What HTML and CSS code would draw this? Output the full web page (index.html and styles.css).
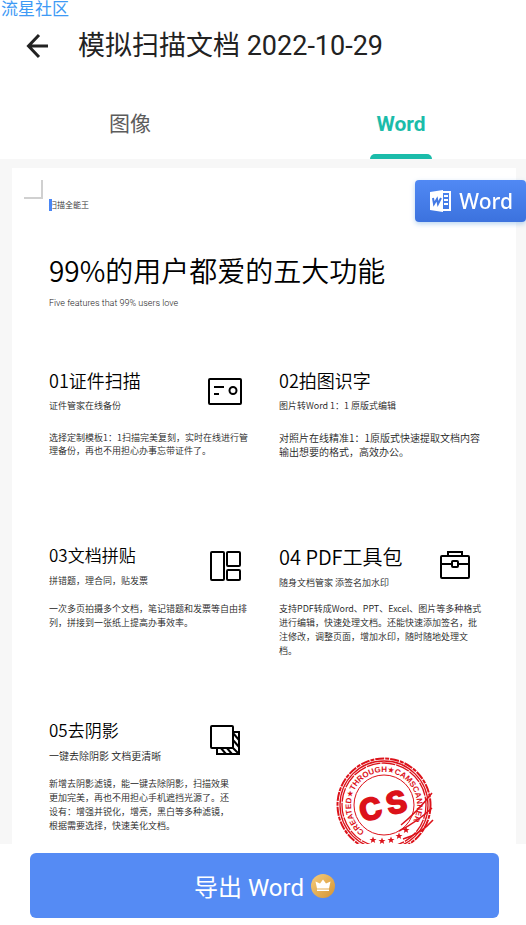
FILE: index.html
```
<!DOCTYPE html>
<html lang="zh-CN">
<head>
    <meta charset="UTF-8">
    <meta name="viewport" content="width=device-width, initial-scale=1.0">
    <title>模拟扫描文档 2022-10-29</title>
    <link rel="stylesheet" href="styles.css">
</head>
<body>
    <span class="watermark">流星社区</span>

    <header class="topbar">
        <button type="button" class="back" aria-label="返回">
            <svg width="24" height="26" viewBox="0 0 24 26" fill="none" stroke="#222" stroke-width="3">
                <path d="M22 13H3M13 2L2.500 13L13 24"/>
            </svg>
        </button>
        <h1>模拟扫描文档 2022-10-29</h1>
    </header>

    <nav class="tabs">
        <button type="button" class="tab">图像</button>
        <button type="button" class="tab active">Word</button>
    </nav>

    <div class="viewer">
        <main class="preview">
            <article class="page">
                <div class="corner"></div>
                <p class="brand">扫描全能王</p>
                <h2>99%的用户都爱的五大功能</h2>
                <p class="subtitle">Five features that 99% users love</p>

                <div class="features">
                    <section class="feature first">
                        <div class="head">
                            <div>
                                <h3>01证件扫描</h3>
                                <p class="sub">证件管家在线备份</p>
                            </div>
                            <svg class="icon" width="34" height="34" viewBox="0 0 34 34" fill="none" stroke="#000" stroke-width="2">
                                <rect x="1" y="4" width="32" height="25" rx="1"/>
                                <path d="M6 12H16M6 19H11"/>
                                <circle cx="25" cy="15.500" r="3.500"/>
                            </svg>
                        </div>
                        <p class="desc">选择定制模板1：1扫描完美复刻，实时在线进行管<br>理备份，再也不用担心办事忘带证件了。</p>
                    </section>

                    <section class="feature first medium">
                        <div class="head">
                            <div>
                                <h3>02拍图识字</h3>
                                <p class="sub">图片转Word 1：1 原版式编辑</p>
                            </div>
                        </div>
                        <p class="desc">对照片在线精准1：1原版式快速提取文档内容<br>输出想要的格式，高效办公。</p>
                    </section>

                    <section class="feature">
                        <div class="head">
                            <div>
                                <h3>03文档拼贴</h3>
                                <p class="sub">拼错题，理合同，贴发票</p>
                            </div>
                            <svg class="icon" width="32" height="32" viewBox="0 0 32 32" fill="none" stroke="#000" stroke-width="2">
                                <rect x="1" y="2" width="13" height="28" rx="1"/>
                                <rect x="17" y="2" width="13" height="14" rx="1"/>
                                <rect x="17" y="20" width="13" height="10" rx="1"/>
                            </svg>
                        </div>
                        <p class="desc">一次多页拍摄多个文档，笔记错题和发票等自由排<br>列，拼接到一张纸上提高办事效率。</p>
                    </section>

                    <section class="feature large">
                        <div class="head">
                            <div>
                                <h3>04 PDF工具包</h3>
                                <p class="sub">随身文档管家 添签名加水印</p>
                            </div>
                            <svg class="icon" width="32" height="32" viewBox="0 0 32 32" fill="none" stroke="#000" stroke-width="2">
                                <rect x="1" y="6" width="28" height="22" rx="1"/>
                                <path d="M8 6V2H22V6M1 14H12M18 14H29"/>
                                <rect x="12" y="11" width="6" height="6" rx="1"/>
                            </svg>
                        </div>
                        <p class="desc">支持PDF转成Word、PPT、Excel、图片等多种格式<br>进行编辑，快速处理文档。还能快速添加签名，批<br>注修改，调整页面，增加水印，随时随地处理文<br>档。</p>
                    </section>

                    <section class="feature shadow">
                        <div class="head">
                            <div>
                                <h3>05去阴影</h3>
                                <p class="sub">一键去除阴影 文档更清晰</p>
                            </div>
                            <svg class="icon" width="32" height="32" viewBox="0 0 32 32" fill="none" stroke="#000" stroke-width="2">
                                <path d="M7 22V29H29V7H23"/>
                                <path d="M10 22L16 29M16 22L22 29M22 22L29 29M23 15L29 22M23 8L29 15"/>
                                <rect x="1" y="1" width="22" height="22" rx="1" fill="#fff"/>
                            </svg>
                        </div>
                        <p class="desc">新增去阴影滤镜，能一键去除阴影，扫描效果<br>更加完美，再也不用担心手机遮挡光源了。还<br>设有：增强并锐化，增亮，黑白等多种滤镜，<br>根据需要选择，快速美化文档。</p>
                    </section>

                    <div class="stamp">
                        <svg width="100" height="100" viewBox="0 0 100 100" fill="none" stroke="#dc121a">
                            <circle cx="49" cy="49" r="46.500" stroke-width="2" stroke-dasharray="9 1 4 1"/>
                            <circle cx="49" cy="49" r="44" stroke-width="1.300"/>
                            <circle cx="49" cy="49" r="42" stroke-width="1.300" stroke-dasharray="14 1"/>
                            <circle cx="49" cy="49" r="30" stroke-width="1"/>
                            <path id="ring" stroke="none" d="M29.600 75.700A33 33 0 1 1 68.400 75.700"/>
                            <text class="ring-text"><textPath href="#ring">CREATED★THROUGH★CAMSCANNER</textPath></text>
                            <text class="initials" x="23 51" y="61" transform="rotate(-14 49 49)">CS</text>
                            <g fill="#dc121a" stroke="none">
                                <path id="star" d="M0-3.500L1-1L3.500-1L1.500.500L2.200 3L0 1.500L-2.200 3L-1.500.500L-3.500-1L-1-1Z" transform="translate(47 85)"/>
                                <use href="#star" x="-9" y="-1"/>
                                <use href="#star" x="9" y="-1"/>
                                <use href="#star" x="17" y="-5"/>
                                <use href="#star" x="24" y="-11"/>
                            </g>
                            <path stroke-width="1.500" d="M66 69Q82 56 97 37M64 75Q82 66 97 52M68 83Q86 78 98 64"/>
                        </svg>
                    </div>
                </div>
            </article>
        </main>

        <button type="button" class="word-badge">
            <svg width="23" height="22" viewBox="0 0 23 22">
                <path fill="#fff" d="M1 2L14 0V22L1 20Z"/>
                <path fill="none" stroke="#fff" stroke-width="2" d="M14 2H21V20H14M15 6H19M15 10H19M15 14H19"/>
                <path fill="none" stroke="#4379e4" stroke-width="2" d="M4 8L5 14L8 9L9 14L12 8"/>
            </svg>
            Word
        </button>
    </div>

    <footer class="bottom">
        <button type="button" class="export">
            导出 Word
            <svg width="24" height="24" viewBox="0 0 24 24">
                <defs>
                    <linearGradient id="gold" x1="0" y1="0" x2="1" y2="1">
                        <stop offset="0" stop-color="#f6cd7c"/>
                        <stop offset="1" stop-color="#d49333"/>
                    </linearGradient>
                </defs>
                <circle cx="12" cy="12" r="12" fill="url(#gold)"/>
                <path fill="#fff" d="M4.500 7.500L9 9.500L12 5.500L15 9.500L19.500 7.500L18 14.500H6ZM6 15.500H18V17H6Z"/>
            </svg>
        </button>
    </footer>
</body>
</html>
```

FILE: styles.css
```
* { box-sizing: border-box; }
body { margin: 0; height: 100vh; display: flex; flex-direction: column; background: #fff; color: #222; font-family: Roboto, "Noto Sans CJK SC", sans-serif; }
h1, h2, h3, p { margin: 0; font-weight: inherit; }
button { border: none; background: none; padding: 0; font-family: inherit; cursor: pointer; }
svg { display: block; flex: none; }

.watermark { position: absolute; top: 0; left: 1px; font-size: 17px; line-height: 18px; color: #3e9af5; }

.topbar { display: flex; align-items: center; height: 91px; padding-left: 26px; gap: 28px; }
.topbar h1 { font-size: 27px; line-height: 32px; font-weight: 400; }

.tabs { display: grid; grid-template-columns: 260fr 266fr; height: 68px; }
.tab { position: relative; padding-bottom: 2px; font-size: 21px; line-height: 24px; color: #5c5c5c; }
.tab.active { margin-left: 16px; font-weight: 700; color: #1bbcaa; }
.tab.active::after { content: ""; position: absolute; bottom: 0; left: 50%; width: 62px; height: 5px; margin-left: -31px; border-radius: 5px 5px 0 0; background: #1bbcaa; }

.viewer { position: relative; flex: 1; min-height: 0; }
.preview { height: 100%; overflow-y: auto; scrollbar-width: none; padding: 9px 10px 9px 12px; background: #f7f7f7; }
.page { background: #fff; color: #000; padding: 12px 37px 60px; font-family: "Noto Sans CJK SC", sans-serif; font-weight: 350; }
.corner { width: 19px; height: 19px; margin-left: -25px; border: solid #d0d0d0; border-width: 0 2px 2px 0; }
.brand { position: relative; font-size: 8px; line-height: 12px; color: #333; }
.brand::before { content: ""; position: absolute; left: 0; top: 0; width: 3px; height: 12px; background: #4a86f5; }
.page h2 { margin-top: 39px; font-size: 28px; line-height: 40px; }
.subtitle { margin-top: 7px; font-family: Roboto, sans-serif; font-size: 9px; line-height: 12px; color: #222; }

.features { display: grid; grid-template-columns: 230px 1fr; grid-auto-rows: 175px; margin-top: 57px; }
.head { display: flex; justify-content: space-between; width: 193px; }
.feature h3 { font-size: 17px; line-height: 28px; white-space: nowrap; }
.feature .sub { font-size: 9px; line-height: 24px; color: #222; }
.feature .icon { margin-top: 9px; }
.feature .desc { margin-top: 9px; font-size: 9px; line-height: 14px; color: #222; white-space: nowrap; }
.first h3 { font-size: 18px; }
.first .desc { margin-top: 13px; line-height: 13px; }
.medium .desc, .shadow .sub { font-size: 10px; }
.medium .desc { line-height: 14px; }
.large h3 { font-size: 20px; line-height: 32px; }
.large .sub { line-height: 20px; }
.stamp { padding: 40px 0 0 56px; }
.ring-text { font: 700 8px "Liberation Sans", "DejaVu Sans", sans-serif; fill: #dc121a; stroke: none; }
.initials { font: 900 32px Inter, sans-serif; fill: #dc121a; stroke: none; }

.word-badge { position: absolute; top: 21px; right: 0; display: flex; align-items: center; gap: 7px; height: 42px; padding: 0 13px 0 14px; border-radius: 4px; background: linear-gradient(#5189f4, #3c72de); box-shadow: 0 2px 5px rgba(80, 150, 220, .4); color: #fff; font-family: "Noto Sans", sans-serif; font-size: 21px; font-weight: 500; }

.bottom { padding: 9px 27px 7px 30px; }
.export { display: flex; align-items: center; justify-content: center; gap: 7px; width: 100%; height: 65px; border-radius: 6px; background: #558bf4; color: #fff; font-size: 24px; }
```
